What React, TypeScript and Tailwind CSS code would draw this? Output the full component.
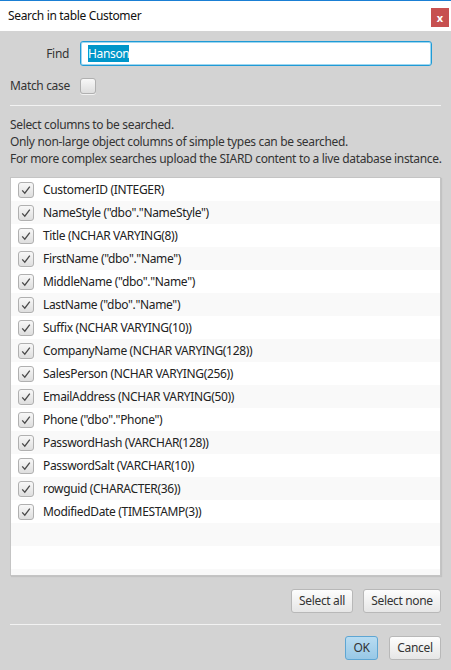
import React from "react";

const cols = [
  'CustomerID (INTEGER)',
  'NameStyle ("dbo"."NameStyle")',
  'Title (NCHAR VARYING(8))',
  'FirstName ("dbo"."Name")',
  'MiddleName ("dbo"."Name")',
  'LastName ("dbo"."Name")',
  'Suffix (NCHAR VARYING(10))',
  'CompanyName (NCHAR VARYING(128))',
  'SalesPerson (NCHAR VARYING(256))',
  'EmailAddress (NCHAR VARYING(50))',
  'Phone ("dbo"."Phone")',
  'PasswordHash (VARCHAR(128))',
  'PasswordSalt (VARCHAR(10))',
  'rowguid (CHARACTER(36))',
  'ModifiedDate (TIMESTAMP(3))',
];

function Check({ checked }: { checked: boolean }) {
  return (
    <div className="w-[16px] h-[16px] rounded-[3px] border border-[#b0b0b0] bg-gradient-to-b from-[#f8f8f8] to-[#dedede] shadow-[0_1px_0_rgba(255,255,255,0.7)] flex items-center justify-center shrink-0">
      {checked && (
        <svg width="12" height="12" viewBox="0 0 12 12">
          <path d="M2.2 6.4 L4.8 9.2 L9.8 2.6" fill="none" stroke="#4a4a4a" strokeWidth="1.3" />
        </svg>
      )}
    </div>
  );
}

function Btn({ children, def, w }: { children: React.ReactNode; def?: boolean; w: string }) {
  return (
    <div
      className={
        "h-[24px] flex items-center justify-center rounded-[3px] border text-[#333] " +
        w +
        " " +
        (def
          ? "border-[#5ea6d3] bg-gradient-to-b from-[#b9dcf1] to-[#98c8e6]"
          : "border-[#b8b8b8] bg-gradient-to-b from-[#fdfdfd] to-[#e6e6e6]")
      }
    >
      {children}
    </div>
  );
}

export default function App() {
  return (
    <div
      className="w-[451px] h-[670px] bg-[#d3d3d3] flex flex-col text-[12px] tracking-[-0.34px] text-[#333] overflow-hidden whitespace-nowrap"
      style={{ fontFamily: '"Noto Sans", "Open Sans", sans-serif' }}
    >
      <div className="h-[31px] border-t border-[#1a7fd4] bg-white flex items-center justify-between pl-[8px] pr-[2px] shrink-0">
        <span className="text-[#111]">Search in table Customer</span>
        <div className="w-[18px] h-[19px] bg-[#c75050] text-white flex items-center justify-center text-[11px] font-bold leading-none mt-[3px] tracking-normal">
          x
        </div>
      </div>
      <div className="px-[10px] flex flex-col">
        <div className="flex items-center mt-[10px]">
          <div className="w-[60px] text-right pr-[1px]">Find</div>
          <div className="ml-[10px] w-[352px] h-[25px] rounded-[3px] border border-[#1f9ad6] bg-white shadow-[inset_0_0_0_1px_#9ed7f0] flex items-center pl-[7px]">
            <span className="bg-[#0096c9] text-white leading-[17px]">Hanson</span>
          </div>
        </div>
        <div className="flex items-center mt-[11px]">
          <div className="w-[70px]">Match case</div>
          <Check checked={false} />
        </div>
        <div className="h-px bg-[#f2f2f2] mt-[10px]" />
        <div className="mt-[10px] leading-[17px]">
          <div>Select columns to be searched.</div>
          <div>Only non-large object columns of simple types can be searched.</div>
          <div>For more complex searches upload the SIARD content to a live database instance.</div>
        </div>
        <div className="mt-[10px] h-[399px] bg-white border border-[#c4c4c4] shadow-[1px_1px_1px_rgba(0,0,0,0.08)] overflow-hidden">
          {Array.from({ length: 18 }).map((_, i) => (
            <div
              key={i}
              className={"h-[23px] flex items-center pl-[7px] " + (i % 2 === 1 ? "bg-[#f9f9f9]" : "bg-white")}
            >
              {i < cols.length && (
                <>
                  <Check checked />
                  <span className="ml-[9px] text-[#222]">{cols[i]}</span>
                </>
              )}
            </div>
          ))}
        </div>
        <div className="flex justify-end gap-[10px] mt-[13px]">
          <Btn w="w-[62px]">Select all</Btn>
          <Btn w="w-[78px]">Select none</Btn>
        </div>
        <div className="h-px bg-[#f2f2f2] mt-[11px]" />
        <div className="flex justify-end gap-[11px] mt-[11px]">
          <Btn def w="w-[33px]">OK</Btn>
          <Btn w="w-[52px]">Cancel</Btn>
        </div>
      </div>
    </div>
  );
}
